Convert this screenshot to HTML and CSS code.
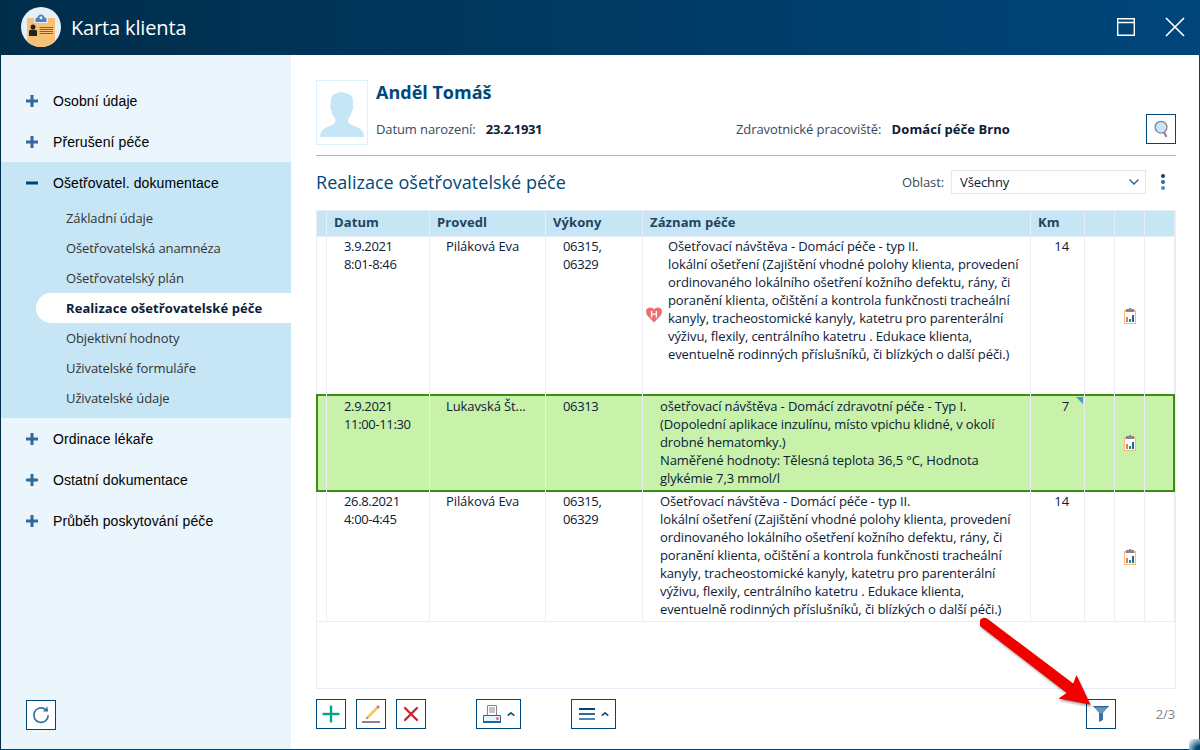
FILE: index.html
```html
<!DOCTYPE html>
<html lang="cs">
<head>
    <meta charset="UTF-8">
    <meta name="viewport" content="width=device-width, initial-scale=1.0">
    <title>Karta klienta</title>
    <link rel="stylesheet" href="styles.css">
</head>
<body>
    <svg class="defs" width="0" height="0">
        <symbol id="report" viewBox="0 0 12 16">
            <path fill="#f5bd72" d="M0 2h12v14H0z"/>
            <path fill="#fff" d="M1 4h10v11H1z"/>
            <path fill="#8d8095" d="M2 1h3V0h2v1h3v3H2z"/>
            <path fill="#ea7079" d="M2 9h2v5H2z"/>
            <path fill="#009b83" d="M5 11h2v3H5z"/>
            <path fill="#2a6391" d="M8 7h2v7H8z"/>
        </symbol>
        <symbol id="plus" viewBox="0 0 12 12">
            <path fill="#35689a" d="M4.5 0h3v4.5H12v3H7.500V12h-3V7.500H0v-3h4.500z"/>
        </symbol>
        <symbol id="caret" viewBox="0 0 8 4">
            <path fill="none" stroke="#0c4a7a" stroke-width="1.600" d="M.7 3.600 4 .9l3.300 2.700"/>
        </symbol>
    </svg>

    <div class="window">
        <header class="titlebar">
            <svg class="logo" width="40" height="40" viewBox="0 0 40 40">
                <clipPath id="round"><circle cx="20" cy="20" r="20"/></clipPath>
                <g clip-path="url(#round)">
                    <path fill="#e5eff7" d="M0 0h40v40H0z"/>
                    <rect x="6" y="11" width="28" height="32" rx="1" fill="#f7c077"/>
                    <path fill="#e5eff7" d="M13 10h14v6H13z"/>
                    <path fill="#4f80c1" d="M14.500 15v-3.200q.5-1.300 2-1.300 1-3 3.500-3t3.500 3q1.500 0 2 1.300V15z"/>
                    <circle cx="20" cy="10.800" r="1.500" fill="#e5eff7"/>
                    <circle cx="12" cy="20" r="2.500" fill="#26221f"/>
                    <path fill="#26221f" d="M8 29v-5q.5-1.500 4-1.500t4 1.500v5z"/>
                    <path stroke="#6d583d" d="M18.500 20.500H32M18.500 22.500H32M18.500 24.500H32M18.500 26.500H32" stroke-width=".9"/>
                </g>
            </svg>
            <h1>Karta klienta</h1>
            <svg class="maximize" width="18" height="18" viewBox="0 0 18 18" fill="none" stroke="#fff">
                <path stroke-width="1.400" d="M.7.7h16.600v16.600H.7zM.7 4.500h16.600"/>
            </svg>
            <svg class="close" width="20" height="20" viewBox="0 0 20 20" fill="none" stroke="#fff">
                <path stroke-width="1.700" d="m1 1 18 18M19 1 1 19"/>
            </svg>
        </header>

        <div class="body">
            <nav class="sidebar">
                <div class="group"><svg width="12" height="12"><use href="#plus"/></svg>Osobní údaje</div>
                <div class="group"><svg width="12" height="12"><use href="#plus"/></svg>Přerušení péče</div>
                <div class="open">
                    <div class="group"><svg width="12" height="12" viewBox="0 0 12 12"><path fill="#00427a" d="M0 4.500h12v3H0z"/></svg>Ošetřovatel. dokumentace</div>
                    <ul>
                        <li>Základní údaje</li>
                        <li>Ošetřovatelská anamnéza</li>
                        <li>Ošetřovatelský plán</li>
                        <li class="active">Realizace ošetřovatelské péče</li>
                        <li>Objektivní hodnoty</li>
                        <li>Uživatelské formuláře</li>
                        <li>Uživatelské údaje</li>
                    </ul>
                </div>
                <div class="group"><svg width="12" height="12"><use href="#plus"/></svg>Ordinace lékaře</div>
                <div class="group"><svg width="12" height="12"><use href="#plus"/></svg>Ostatní dokumentace</div>
                <div class="group"><svg width="12" height="12"><use href="#plus"/></svg>Průběh poskytování péče</div>
                <button class="btn refresh">
                    <svg width="18" height="18" viewBox="0 0 18 18">
                        <path fill="none" stroke="#35709b" stroke-width="1.700" d="M16.200 9.300A7.200 7.200 0 1 1 13 3.200"/>
                        <path fill="#35709b" d="m15.300.5.900 5H11z"/>
                    </svg>
                </button>
            </nav>

            <main class="content">
                <section class="client">
                    <div class="photo">
                        <svg width="46" height="50" viewBox="0 0 46 50">
                            <path fill="#c6e5f5" d="M1 49q0-7 7.500-10l5-2.300Q17 35 16.500 31q-3-3-4-8-1.800-2-.8-7-.5-9 5.300-10.500 5-3 11 0Q35 7 33.800 16q1 5-.8 7-1 5-4 8-.5 4 3 5.700l5.500 2.300Q45 42 45 49z"/>
                        </svg>
                    </div>
                    <div class="details">
                        <h2>Anděl Tomáš</h2>
                        <div class="facts">
                            <span class="birth">Datum narození: <b class="digits">23.2.1931</b></span>
                            <span class="place">Zdravotnické pracoviště: <b>Domácí péče Brno</b></span>
                        </div>
                    </div>
                    <button class="btn search">
                        <svg width="14" height="18" viewBox="0 0 14 18">
                            <path stroke="#8d8095" stroke-width="2.200" stroke-linecap="round" d="m9.800 12 2.200 4"/>
                            <circle cx="7" cy="7.200" r="5.900" fill="#c6e5f5" stroke="#8d8095" stroke-width="1.300"/>
                        </svg>
                    </button>
                </section>

                <section class="heading">
                    <h3>Realizace ošetřovatelské péče</h3>
                    <label>Oblast:</label>
                    <div class="select">
                        Všechny
                        <svg width="10" height="6" viewBox="0 0 10 6"><path fill="none" stroke="#35689a" stroke-width="1.500" d="m.5.500 4.500 4.500L9.500.500"/></svg>
                    </div>
                    <svg class="more" width="4" height="16" viewBox="0 0 4 16">
                        <circle cx="2" cy="2" r="2" fill="#00497f"/>
                        <circle cx="2" cy="8" r="2" fill="#2c6a98"/>
                        <circle cx="2" cy="14" r="2" fill="#5589ad"/>
                    </svg>
                </section>

                <div class="table">
                    <div class="row head">
                        <div></div><div>Datum</div><div>Provedl</div><div>Výkony</div><div>Záznam péče</div><div>Km</div><div></div><div></div><div></div>
                    </div>
                    <div class="row first">
                        <div></div>
                        <div class="digits">3.9.2021<br>8:01-8:46</div>
                        <div class="person">Piláková Eva</div>
                        <div class="digits">06315,<br>06329</div>
                        <div class="record with-icon">
                            <svg width="16" height="16" viewBox="0 0 16 16">
                                <path fill="#ed6f74" d="M8 15.500 1.500 8.800Q0 7 0 4.800 0 .8 4 .5q2.500-.2 4 1.800Q9.500.3 12 .5q4 .3 4 4.300 0 2.200-1.500 4z"/>
                                <path fill="none" stroke="#fff" stroke-width="1.300" d="M5.600 4v6.500M10.400 4v6.500M5.600 7.200h4.800"/>
                            </svg>
                            <p>Ošetřovací návštěva - Domácí péče - typ II.<br>lokální ošetření (Zajištění vhodné polohy klienta, provedení<br>ordinovaného lokálního ošetření kožního defektu, rány, či<br>poranění klienta, očištění a kontrola funkčnosti tracheální<br>kanyly, tracheostomické kanyly, katetru pro parenterální<br>výživu, flexily, centrálního katetru . Edukace klienta,<br>eventuelně rodinných příslušníků, či blízkých o další péči.)</p>
                        </div>
                        <div class="km">14</div>
                        <div></div>
                        <div class="icon"><svg width="12" height="16"><use href="#report"/></svg></div>
                        <div></div>
                    </div>
                    <div class="row selected">
                        <div></div>
                        <div class="digits">2.9.2021<br>11:00-11:30</div>
                        <div class="person">Lukavská Št...</div>
                        <div class="digits">06313</div>
                        <div class="record">ošetřovací návštěva - Domácí zdravotní péče - Typ I.<br>(Dopolední aplikace inzulínu, místo vpichu klidné, v okolí<br>drobné hematomky.)<br>Naměřené hodnoty: Tělesná teplota 36,5 °C, Hodnota<br>glykémie 7,3 mmol/l</div>
                        <div class="km note">7</div>
                        <div></div>
                        <div class="icon"><svg width="12" height="16"><use href="#report"/></svg></div>
                        <div></div>
                    </div>
                    <div class="row last">
                        <div></div>
                        <div class="digits">26.8.2021<br>4:00-4:45</div>
                        <div class="person">Piláková Eva</div>
                        <div class="digits">06315,<br>06329</div>
                        <div class="record">Ošetřovací návštěva - Domácí péče - typ II.<br>lokální ošetření (Zajištění vhodné polohy klienta, provedení<br>ordinovaného lokálního ošetření kožního defektu, rány, či<br>poranění klienta, očištění a kontrola funkčnosti tracheální<br>kanyly, tracheostomické kanyly, katetru pro parenterální<br>výživu, flexily, centrálního katetru . Edukace klienta,<br>eventuelně rodinných příslušníků, či blízkých o další péči.)</div>
                        <div class="km">14</div>
                        <div></div>
                        <div class="icon"><svg width="12" height="16"><use href="#report"/></svg></div>
                        <div></div>
                    </div>
                </div>

                <footer class="toolbar">
                    <button class="btn">
                        <svg width="18" height="18" viewBox="0 0 18 18">
                            <path stroke="#9edccf" stroke-width="3" d="M9 1v16M1 9h16"/>
                            <path stroke="#00a287" stroke-width="2" d="M9 .5v17M.5 9h17"/>
                        </svg>
                    </button>
                    <button class="btn">
                        <svg width="18" height="18" viewBox="0 0 18 18">
                            <path stroke="#8d8095" stroke-width="2" d="M0 17h18"/>
                            <path stroke="#f9c45c" stroke-width="2.600" d="M5.500 12.500 15 3"/>
                            <path stroke="#ea7079" stroke-width="2.600" d="m15 3 2-2"/>
                            <path fill="#8d8095" d="m4.500 11.600 2 2L4 14.500z"/>
                        </svg>
                    </button>
                    <button class="btn">
                        <svg width="16" height="16" viewBox="0 0 16 16">
                            <path fill="none" stroke="#ce1f2d" stroke-width="2.300" stroke-linecap="round" d="m2 2 12 12M14 2 2 14"/>
                        </svg>
                    </button>
                    <button class="btn wide">
                        <svg width="18" height="18" viewBox="0 0 18 18">
                            <path fill="#fff" stroke="#8d8095" d="M4.500.500h9v11h-9z"/>
                            <path fill="#c8c3cb" d="M6 2h6v6H6z"/>
                            <path fill="#e9f5fc" stroke="#24649a" d="M.5 10.500h17v7H.5z"/>
                            <path fill="#24649a" d="M0 16h18v2H0z"/>
                            <circle cx="14.500" cy="13.500" r="1.500" fill="#ea7079"/>
                        </svg>
                        <svg width="8" height="4"><use href="#caret"/></svg>
                    </button>
                    <button class="btn wide">
                        <svg width="16" height="12" viewBox="0 0 16 12">
                            <path fill="#00427a" d="M0 0h16v2H0z"/>
                            <path fill="#2c6a98" d="M0 5h16v2H0z"/>
                            <path fill="#5087ae" d="M0 10h16v2H0z"/>
                        </svg>
                        <svg width="8" height="4"><use href="#caret"/></svg>
                    </button>
                    <button class="btn filter">
                        <svg width="16" height="16" viewBox="0 0 16 16">
                            <path fill="#6b98b8" d="M0 0h16L10 7H6z"/>
                            <path fill="#24649a" d="M0 0h16l-1 1.200H1z"/>
                            <path fill="#3a71a0" d="M6 7h4v7l-4 2z"/>
                        </svg>
                    </button>
                    <span class="count">2/3</span>
                </footer>
            </main>
        </div>
        <div class="grip"></div>

        <!-- arrow pointing at the filter button -->
        <svg class="arrow" width="130" height="110" viewBox="0 0 130 110">
            <path fill="#f20000" d="M1.200 27a5 5 0 0 1 6.200-8.200L93.200 83.500 96.500 75 110.500 104.800 78.300 98.500 86.700 93Z"/>
        </svg>
    </div>
</body>
</html>
```

FILE: styles.css
```css
* {
    box-sizing: border-box;
    margin: 0;
    padding: 0;
}

body {
    font-family: "Open Sans", sans-serif;
    font-size: 13px;
    line-height: 18px;
    letter-spacing: -0.1px;
    color: #0b2037;
    background: #fff;
}

svg {
    display: block;
    flex: none;
}

.defs {
    position: absolute;
}

.window {
    position: relative;
    display: flex;
    flex-direction: column;
    width: 1200px;
    height: 750px;
    overflow: hidden;
}

/* Title bar */
.titlebar {
    display: flex;
    align-items: center;
    height: 55px;
    padding: 0 15px 1px 21px;
    background: linear-gradient(90deg, #002d4a, #00467b);
    color: #fff;
}

.titlebar h1 {
    flex: 1;
    margin-left: 10px;
    padding-top: 1px;
    font-size: 20px;
    font-weight: 400;
    letter-spacing: -0.15px;
}

.maximize {
    margin-right: 30px;
}

.body {
    display: flex;
    flex: 1;
    border: 1px solid #00436f;
    border-top: 0;
    border-left-color: #002d4a;
}

/* Left menu */
.sidebar {
    display: flex;
    flex-direction: column;
    width: 290px;
    padding: 25px 0 19px;
    background: #eaf5fc;
}

.group {
    display: flex;
    align-items: center;
    gap: 15px;
    height: 41px;
    padding-left: 25px;
    font-family: "Liberation Sans", sans-serif;
    font-size: 14px;
    letter-spacing: 0.1px;
    color: #000;
}

.open {
    background: #c6e5f5;
    padding-bottom: 5px;
}

.open ul {
    list-style: none;
}

.open li {
    height: 30px;
    line-height: 30px;
    padding-left: 65px;
    color: #333;
}

.open li.active {
    margin-left: 35px;
    padding-left: 30px;
    border-radius: 15px 0 0 15px;
    background: #fff;
    color: #0b2037;
    font-weight: 700;
    letter-spacing: 0.07px;
}

.btn {
    display: flex;
    align-items: center;
    justify-content: center;
    width: 30px;
    height: 30px;
    border: 1px solid #00487a;
    background: #fff;
}

.refresh {
    margin: auto 0 0 25px;
}

/* Main area */
.content {
    flex: 1;
    padding: 25px 23px 0 25px;
}

.client {
    display: flex;
    height: 76px;
    border-bottom: 1px solid #b5b5b5;
}

.photo {
    display: flex;
    align-items: center;
    justify-content: center;
    width: 52px;
    height: 65px;
    border: 1px solid #dff1fa;
}

.details {
    flex: 1;
    margin-left: 8px;
}

.details h2 {
    font-size: 18px;
    line-height: 24px;
    letter-spacing: 0;
    color: #00487a;
}

.facts {
    display: flex;
    margin-top: 16px;
    color: #38495c;
}

.facts b {
    margin-left: 7px;
    color: #0b2037;
    letter-spacing: 0.07px;
}

.facts b.digits,
.digits {
    letter-spacing: -0.35px;
}

.birth {
    width: 360px;
}

.search {
    margin-top: 34px;
}

.heading {
    display: flex;
    align-items: center;
    height: 54px;
    padding: 0 11px 2px 0;
}

.heading h3 {
    flex: 1;
    font-size: 18px;
    font-weight: 400;
    letter-spacing: 0.03px;
    color: #00487a;
}

.heading label {
    color: #38495c;
}

.select {
    display: flex;
    align-items: center;
    justify-content: space-between;
    width: 195px;
    height: 24px;
    margin: 0 15px 0 7px;
    padding: 0 6px 0 8px;
    border: 1px solid #e4e7f3;
}

/* Records table */
.table {
    height: 479px;
    border: 1px solid #e9ecf9;
    border-left: 0;
    box-shadow: inset 1px 0 #e9ecf9;
}

.row {
    display: grid;
    grid-template-columns: 10px 103px 116px 97px 388px 54px 30px 30px 30px 1px;
    white-space: nowrap;
    border-bottom: 1px solid #e9ecf9;
    box-shadow: inset -1px 0 #e9ecf9;
}

.row > div {
    border-left: 1px solid #e9ecf9;
    padding-left: 17px;
}

.row > .person {
    padding-left: 16px;
}

.head {
    height: 26px;
    background: #c6e5f5;
    color: #24435f;
    font-weight: 700;
    letter-spacing: 0.1px;
}

.head > div {
    padding: 2px 0 0 7px;
}

.first {
    height: 157px;
    border-bottom: 0;
}

.selected {
    height: 98px;
    border-bottom: 0;
    background: #c8f1aa;
    box-shadow: inset 0 0 0 2px #3d8b15;
}

.selected > div {
    padding-top: 3px;
}

.selected > div:first-child {
    border-color: transparent;
}

.last {
    height: 130px;
}

.row > .with-icon {
    display: flex;
    padding-left: 3px;
}

.with-icon svg {
    margin: 70px 6px 0 0;
}

.row > .km {
    padding-left: 0;
    padding-right: 15px;
    text-align: right;
}

.note {
    position: relative;
}

.note::after {
    content: "";
    position: absolute;
    top: 3px;
    right: 1px;
    border-top: 7px solid #4a9ad4;
    border-left: 7px solid transparent;
}

.row > .icon {
    display: flex;
    align-items: center;
    justify-content: center;
    padding: 0;
}

/* Bottom buttons */
.toolbar {
    display: flex;
    align-items: center;
    gap: 10px;
    margin-top: 10px;
}

.wide {
    width: 45px;
    gap: 6px;
    margin-left: 40px;
}

.filter {
    margin-left: auto;
}

.count {
    width: 50px;
    padding-right: 1px;
    text-align: right;
    color: #858585;
}

.grip {
    position: absolute;
    right: 0;
    bottom: 0;
    width: 11px;
    height: 11px;
    background: radial-gradient(circle at 100% 100%, #00436f 25%, #7ba5c0 60%, transparent 95%);
}

.arrow {
    position: absolute;
    left: 980px;
    top: 600px;
    filter: drop-shadow(1px 2px 1px rgba(0, 0, 0, 0.35));
}
```
